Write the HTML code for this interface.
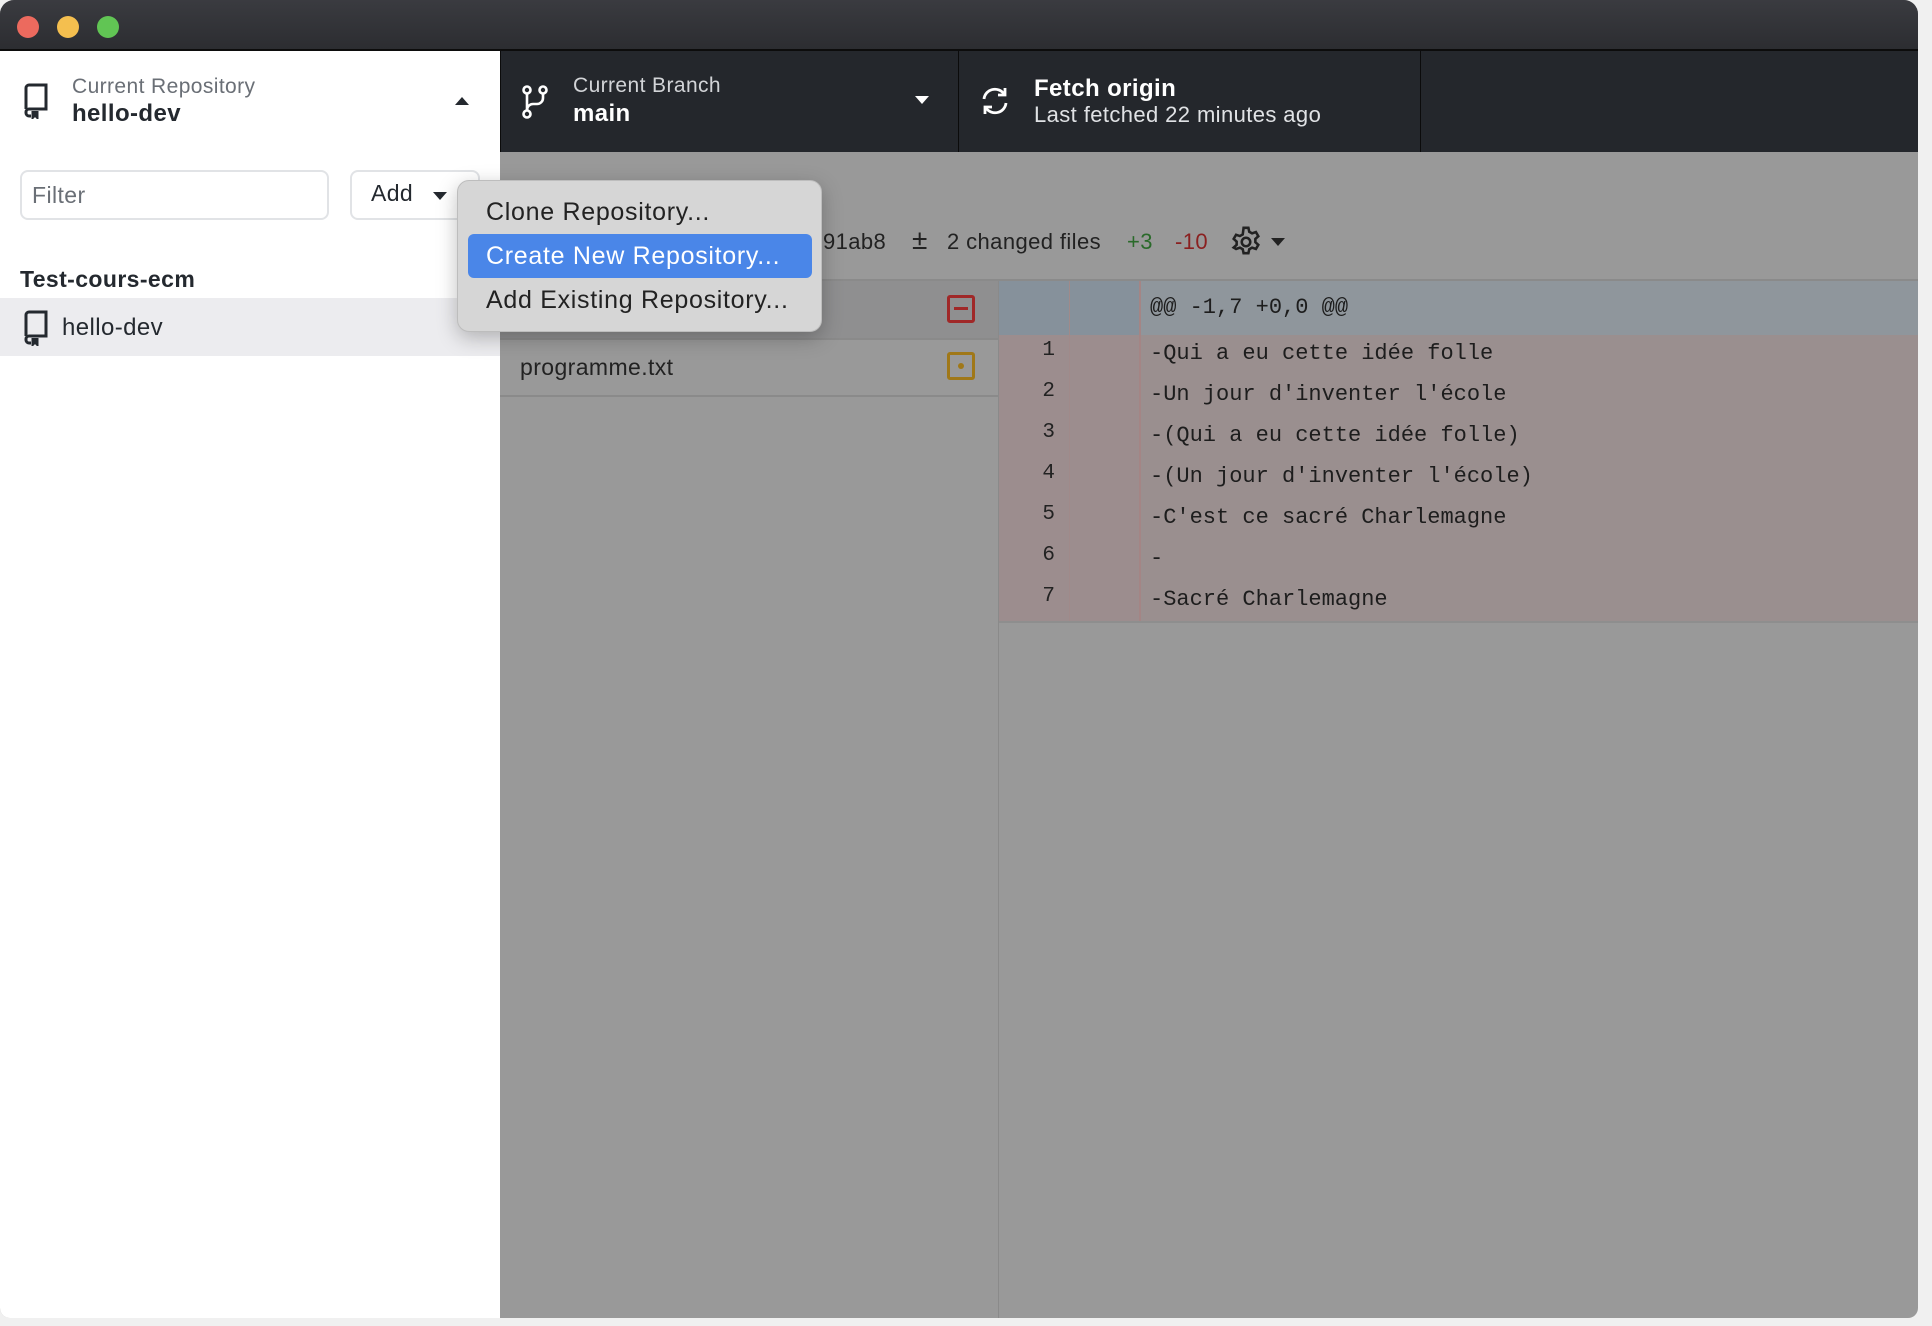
<!DOCTYPE html>
<html><head><meta charset="utf-8"><style>
*{margin:0;padding:0;box-sizing:border-box}
body{width:1932px;height:1326px;background:#f0f0f0;font-family:"Liberation Sans",sans-serif;position:relative;overflow:hidden;letter-spacing:0.4px}
.win{position:absolute;left:0;top:0;width:1918px;height:1318px;border-radius:14px 14px 10px 10px;overflow:hidden;background:#999}
.title{position:absolute;left:0;top:0;width:100%;height:51px;background:linear-gradient(#3a3b40,#2c2d31);border-bottom:2px solid #0c0c0c}
.dot{position:absolute;top:16px;width:22px;height:22px;border-radius:50%}
.side{position:absolute;left:0;top:51px;width:500px;height:1267px;background:#fff}
.tb{position:absolute;top:51px;height:101px;background:#24272c;border-left:1px solid #0b0b0b}
.a{position:absolute;white-space:nowrap}
.mono{font-family:"Liberation Mono",monospace;font-size:22px;color:#1d1d1d;letter-spacing:0}
.ln{position:absolute;left:998px;width:71px;text-align:right;padding-right:14px;font-family:"Liberation Mono",monospace;font-size:21px;color:#222;letter-spacing:0}
.mi{font-size:25px;letter-spacing:0.7px}
</style></head><body>
<div class="win">
<div class="title">
<div class="dot" style="left:17px;background:#ec6a5e"></div>
<div class="dot" style="left:57px;background:#f4bf4f"></div>
<div class="dot" style="left:97px;background:#61c554"></div>
</div>
<div class="side">
<svg class="a" style="left:22px;top:32px" width="28" height="36" viewBox="0 0 28 36" fill="none" stroke="#24292f" stroke-width="3"><path d="M4 26V5a3 3 0 0 1 3-3h17v24H7a3 3 0 0 0-3 3v1a3 3 0 0 0 3 3h2"/><path d="M11 28v6l2-2 2 2v-6" fill="#24292f"/></svg>
<div class="a" style="left:72px;top:24px;font-size:21px;color:#6a6f76">Current Repository</div>
<div class="a" style="left:72px;top:49px;font-size:24px;font-weight:bold;color:#24292f">hello-dev</div>
<div class="a" style="left:455px;top:46px;width:0;height:0;border-left:7px solid transparent;border-right:7px solid transparent;border-bottom:8px solid #24292f"></div>
<div class="a" style="left:20px;top:119px;width:309px;height:50px;border:2px solid #e1e3e6;border-radius:8px"></div>
<div class="a" style="left:32px;top:131px;font-size:23px;color:#6a6f76">Filter</div>
<div class="a" style="left:350px;top:119px;width:130px;height:50px;border:2px solid #e1e3e6;border-radius:8px"></div>
<div class="a" style="left:371px;top:129px;font-size:23px;color:#24292f">Add</div>
<div class="a" style="left:433px;top:141px;width:0;height:0;border-left:7px solid transparent;border-right:7px solid transparent;border-top:8px solid #24292f"></div>
<div class="a" style="left:20px;top:215px;font-size:23px;font-weight:bold;color:#24292f">Test-cours-ecm</div>
<div class="a" style="left:0;top:247px;width:500px;height:58px;background:#ececef"></div>
<svg class="a" style="left:22px;top:259px" width="28" height="36" viewBox="0 0 28 36" fill="none" stroke="#24292f" stroke-width="3"><path d="M4 26V5a3 3 0 0 1 3-3h17v24H7a3 3 0 0 0-3 3v1a3 3 0 0 0 3 3h2"/><path d="M11 28v6l2-2 2 2v-6" fill="#24292f"/></svg>
<div class="a" style="left:62px;top:263px;font-size:24px;color:#24292f">hello-dev</div>
</div>
<div class="tb" style="left:500px;width:458px">
<svg class="a" style="left:20px;top:33px" width="30" height="36" viewBox="0 0 30 36" fill="none" stroke="#fff" stroke-width="2.6"><circle cx="6" cy="6" r="3.5"/><circle cx="22" cy="6" r="3.5"/><circle cx="6" cy="30" r="3.5"/><path d="M6 10v16M22 10v4a6 6 0 0 1-6 6h-4a6 6 0 0 0-6 6"/></svg>
<div class="a" style="left:72px;top:23px;font-size:21px;color:#d2d4d7">Current Branch</div>
<div class="a" style="left:72px;top:49px;font-size:24px;font-weight:bold;color:#fff">main</div>
<div class="a" style="left:414px;top:45px;width:0;height:0;border-left:7px solid transparent;border-right:7px solid transparent;border-top:8px solid #fff"></div>
</div>
<div class="tb" style="left:958px;width:462px">
<svg class="a" style="left:20px;top:34px" width="32" height="32" viewBox="0 0 32 32" fill="none" stroke="#fff" stroke-width="2.8"><path d="M5 14A11 11 0 0 1 25 9M27 18A11 11 0 0 1 7 23"/><path d="M26 3v7h-7M6 29v-7h7"/></svg>
<div class="a" style="left:75px;top:24px;font-size:24px;font-weight:bold;color:#fff">Fetch origin</div>
<div class="a" style="left:75px;top:51px;font-size:22px;color:#e0e2e5">Last fetched 22 minutes ago</div>
</div>
<div class="tb" style="left:1420px;width:498px"></div>
<!-- content -->
<div class="a" style="left:823px;top:229px;font-size:22px;color:#222">91ab8</div>
<div class="a" style="left:912px;top:224px;font-size:28px;color:#222">±</div>
<div class="a" style="left:947px;top:229px;font-size:22px;color:#222">2 changed files</div>
<div class="a" style="left:1127px;top:229px;font-size:22px;color:#2a6a2a">+3</div>
<div class="a" style="left:1175px;top:229px;font-size:22px;color:#8a2020">-10</div>
<svg class="a" style="left:1229px;top:225px" width="34" height="34" viewBox="0 0 24 24" fill="none" stroke="#222" stroke-width="1.8"><circle cx="12" cy="12" r="3"/><path d="M10.3 2h3.4l.6 2.8 2 1.1 2.7-.9 1.7 2.9-2.1 1.9v2.3l2.1 1.9-1.7 2.9-2.7-.9-2 1.1-.6 2.8h-3.4l-.6-2.8-2-1.1-2.7.9L3.3 15.9l2.1-1.9v-2.3L3.3 9.8 5 6.9l2.7.9 2-1.1z"/></svg>
<div class="a" style="left:1271px;top:238px;width:0;height:0;border-left:7px solid transparent;border-right:7px solid transparent;border-top:8px solid #222"></div>
<div class="a" style="left:500px;top:279px;width:1418px;height:2px;background:#8a8a8a"></div>
<div class="a" style="left:500px;top:281px;width:498px;height:57px;background:#8f8f90"></div>
<div class="a" style="left:947px;top:295px;width:28px;height:28px;border:3px solid #a02828;border-radius:3px"></div>
<div class="a" style="left:954px;top:307px;width:14px;height:3px;background:#a02828"></div>
<div class="a" style="left:500px;top:338px;width:498px;height:2px;background:#8a8a8a"></div>
<div class="a" style="left:520px;top:354px;font-size:23px;color:#222">programme.txt</div>
<div class="a" style="left:947px;top:352px;width:28px;height:28px;border:3px solid #a07818;border-radius:3px"></div>
<div class="a" style="left:958px;top:363px;width:6px;height:6px;background:#a07818;border-radius:50%"></div>
<div class="a" style="left:500px;top:395px;width:498px;height:2px;background:#8a8a8a"></div>
<div class="a" style="left:998px;top:281px;width:1px;height:1037px;background:#8a8a8a"></div>
<div class="a" style="left:999px;top:281px;width:919px;height:54px;background:#8f969c"></div>
<div class="a" style="left:999px;top:281px;width:141px;height:54px;background:#86919b"></div>
<div class="a" style="left:999px;top:335px;width:919px;height:287px;background:#9a8f8f"></div>
<div class="a" style="left:999px;top:335px;width:141px;height:287px;background:#9c8d8e"></div>
<div class="a" style="left:1069px;top:281px;width:1px;height:341px;background:#a08a8a"></div>
<div class="a" style="left:1139px;top:281px;width:2px;height:341px;background:#a48585"></div>
<div class="a" style="left:999px;top:621px;width:919px;height:2px;background:#8e8e8e"></div>
<div class="a mono" style="left:1150px;top:295px">@@ -1,7 +0,0 @@</div>
<div class="ln" style="top:339px">1</div><div class="a mono" style="left:1150px;top:341px">-Qui a eu cette idée folle</div>
<div class="ln" style="top:380px">2</div><div class="a mono" style="left:1150px;top:382px">-Un jour d'inventer l'école</div>
<div class="ln" style="top:421px">3</div><div class="a mono" style="left:1150px;top:423px">-(Qui a eu cette idée folle)</div>
<div class="ln" style="top:462px">4</div><div class="a mono" style="left:1150px;top:464px">-(Un jour d'inventer l'école)</div>
<div class="ln" style="top:503px">5</div><div class="a mono" style="left:1150px;top:505px">-C'est ce sacré Charlemagne</div>
<div class="ln" style="top:544px">6</div><div class="a mono" style="left:1150px;top:546px">-</div>
<div class="ln" style="top:585px">7</div><div class="a mono" style="left:1150px;top:587px">-Sacré Charlemagne</div>
<!-- menu -->
<div class="a" style="left:457px;top:180px;width:365px;height:152px;background:#d6d6d6;border:1px solid #bdbdbd;border-radius:12px;box-shadow:0 6px 20px rgba(0,0,0,.25)"></div>
<div class="a" style="left:468px;top:234px;width:344px;height:44px;background:#4a86e8;border-radius:6px"></div>
<div class="a mi" style="left:486px;top:198px;color:#222">Clone Repository...</div>
<div class="a mi" style="left:486px;top:242px;color:#fff">Create New Repository...</div>
<div class="a mi" style="left:486px;top:286px;color:#222">Add Existing Repository...</div>
</div>
</body></html>
